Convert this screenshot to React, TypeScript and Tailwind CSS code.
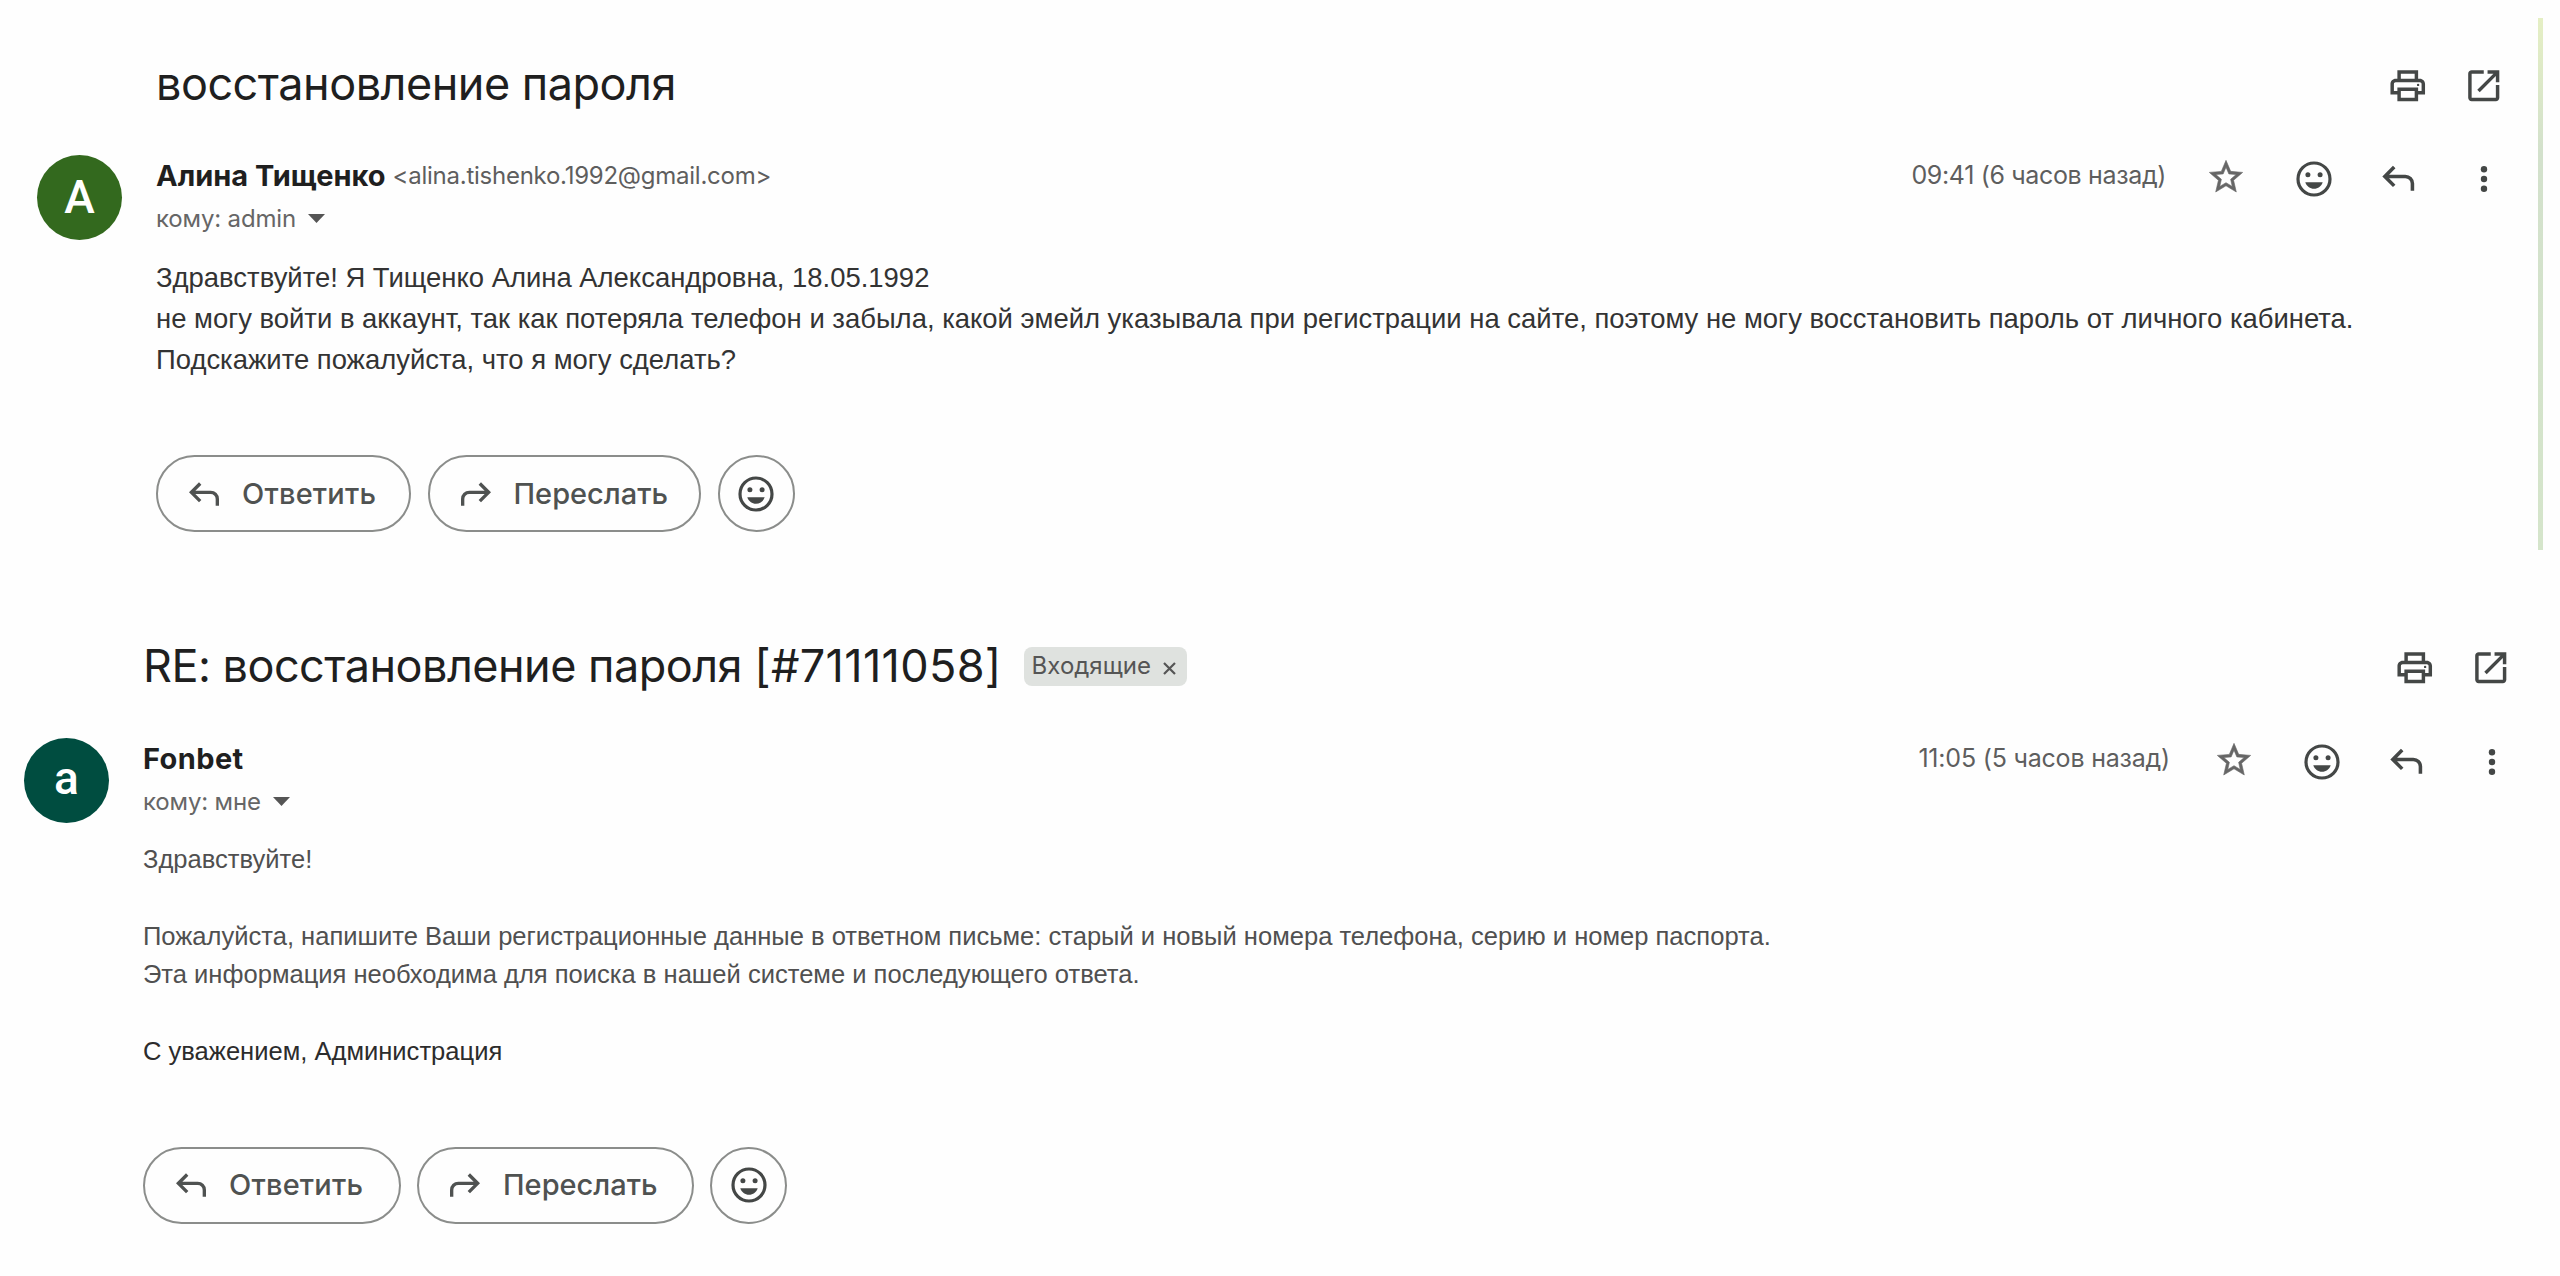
import type { ReactNode } from "react";
import clsx from "clsx";

function PrintIcon() {
  return (
    <svg className="size-[41.5px]" viewBox="0 0 24 24" fill="currentColor">
      <path d="M19 8h-1V3H6v5H5c-1.66 0-3 1.34-3 3v6h4v4h12v-4h4v-6c0-1.66-1.34-3-3-3zM8 5h8v3H8V5zm8 12v2H8v-4h8v2zm2-2v-2H6v2H4v-4c0-.55.45-1 1-1h14c.55 0 1 .45 1 1v4h-2z" />
      <circle cx="18" cy="11.5" r=".7" />
    </svg>
  );
}

function OpenIcon() {
  return (
    <svg className="size-[41.5px]" viewBox="0 0 24 24" fill="currentColor">
      <path d="M19 19H5V5h7V3H5c-1.11 0-2 .9-2 2v14c0 1.1.89 2 2 2h14c1.1 0 2-.9 2-2v-7.4h-2V19zM14.2 3v2h3.39l-9.33 9.33 1.41 1.41L19 6.41V10h2V3h-6.8z" />
    </svg>
  );
}

function StarIcon() {
  return (
    <svg className="size-[40px]" viewBox="0 0 24 24" fill="currentColor" stroke="currentColor" strokeWidth=".35">
      <path d="M22 9.24l-7.19-.62L12 2 9.19 8.63 2 9.24l5.46 4.73L5.82 21 12 17.27 18.18 21l-1.63-7.03L22 9.24zM12 15.4l-3.76 2.27 1-4.28-3.32-2.88 4.38-.38L12 6.1l1.71 4.04 4.38.38-3.32 2.88 1 4.28L12 15.4z" />
    </svg>
  );
}

function SmileIcon() {
  return (
    <svg className="size-9" viewBox="0 0 36 36" fill="currentColor">
      <circle cx="18" cy="18" r="16" fill="none" stroke="currentColor" strokeWidth="3.2" />
      <circle cx="11.9" cy="13.7" r="2.5" />
      <circle cx="24.1" cy="13.7" r="2.5" />
      <path d="M9.3 21.3h17.4c-1.3 4-4.7 6.5-8.7 6.5s-7.4-2.5-8.7-6.5z" />
    </svg>
  );
}

function ReplyIcon({ className }: { className: string }) {
  return (
    <svg className={className} viewBox="0 -960 960 960" fill="currentColor">
      <path d="M760-200v-160q0-50-35-85t-85-35H273l144 144-57 56-240-240 240-240 57 56-144 144h367q83 0 141.5 58.5T840-360v160h-80Z" />
    </svg>
  );
}

function DotsIcon() {
  return (
    <svg className="h-7 w-2" viewBox="0 0 8 28" fill="currentColor">
      <circle cx="4" cy="4.2" r="3.2" />
      <circle cx="4" cy="14" r="3.2" />
      <circle cx="4" cy="23.8" r="3.2" />
    </svg>
  );
}

function Toolbar({ time, timeClass }: { time: string; timeClass: string }) {
  return (
    <div className="flex items-center text-[#444746]">
      <span className={clsx("text-[25px] text-[#5e5e5e]", timeClass)}>{time}</span>
      <div className="flex items-center pt-1.5 *:flex *:w-[85px] *:justify-center">
        <span className="pr-[5px] pb-[3px] text-[#666]"><StarIcon /></span>
        <span><SmileIcon /></span>
        <span><ReplyIcon className="size-[42.5px]" /></span>
        <span><DotsIcon /></span>
      </div>
    </div>
  );
}

function Actions({ replyClass, forwardClass, className }: { replyClass: string; forwardClass: string; className: string }) {
  const button = "flex h-[77px] items-center gap-[18px] rounded-full border-2 border-[#8b8d8b] pl-[26px]";
  return (
    <div className={clsx("flex text-[29px] font-medium text-[#4f5251]", className)}>
      <button className={clsx(button, replyClass)}>
        <ReplyIcon className="size-10 shrink-0" />
        <span className="tracking-[0.2px]">Ответить</span>
      </button>
      <button className={clsx(button, forwardClass)}>
        <ReplyIcon className="size-10 shrink-0 -scale-x-100" />
        <span>Переслать</span>
      </button>
      <button className="flex size-[77px] items-center justify-center rounded-full border-2 border-[#8b8d8b] text-[#444746]">
        <SmileIcon />
      </button>
    </div>
  );
}

interface MessageProps {
  subject: ReactNode;
  subjectClass: string;
  avatar: ReactNode;
  sender: ReactNode;
  recipient: string;
  time: string;
  timeClass: string;
  className: string;
  children: ReactNode;
}

function Message({ subject, subjectClass, avatar, sender, recipient, time, timeClass, className, children }: MessageProps) {
  return (
    <article className={className}>
      <header className={clsx("flex h-[60px] items-center justify-between", subjectClass)}>
        {subject}
        <div className="flex pt-1 text-[#444746] *:flex *:w-[76px] *:justify-center">
          <span><PrintIcon /></span>
          <span><OpenIcon /></span>
        </div>
      </header>
      <div className="flex gap-[34px]">
        {avatar}
        <div className="min-w-0 flex-1">
          <div className="flex h-[41px] items-center justify-between">
            <div className="flex items-center gap-[7px]">{sender}</div>
            <Toolbar time={time} timeClass={timeClass} />
          </div>
          <div className="flex h-[45px] items-center gap-3 text-[24px] tracking-[-0.15px] text-[#666]">
            {recipient}
            <svg className="h-[9px] w-[17px]" viewBox="0 0 17 9" fill="#555">
              <path d="M0 0h17L8.5 9z" />
            </svg>
          </div>
          {children}
        </div>
      </div>
    </article>
  );
}

export default function App() {
  return (
    <main className="h-[1276px] w-[2560px] overflow-hidden bg-[#fefefe] pt-[18px] font-[Inter,sans-serif]">
      <div className="flex h-[532px] pr-[17px]">
        <Message
          className="flex-1 pt-9 pr-3 pl-[37px]"
          subjectClass="mb-[41px] pr-[4px] pl-[119px]"
          subject={<h2 className="text-[45px] tracking-[-0.5px] text-[#1f1f1f]">восстановление пароля</h2>}
          avatar={
            <div className="flex size-[85px] items-center justify-center rounded-full bg-[#33691e] font-[Roboto] text-[46px] font-medium text-white">
              A
            </div>
          }
          sender={
            <>
              <b className="text-[29px] text-[#1f1f1f]">Алина Тищенко</b>
              <span className="text-[24px] tracking-[-0.25px] text-[#5e5e5e]">&lt;alina.tishenko.1992@gmail.com&gt;</span>
            </>
          }
          recipient="кому: admin"
          time="09:41 (6 часов назад)"
          timeClass="mr-[20px] tracking-[-0.35px]"
        >
          <div className="mt-4 font-['Liberation_Sans',Arial,sans-serif] text-[27.45px] leading-[41px] whitespace-nowrap text-[#333]">
            <p>Здравствуйте! Я Тищенко Алина Александровна, 18.05.1992</p>
            <p>не могу войти в аккаунт, так как потеряла телефон и забыла, какой эмейл указывала при регистрации на сайте, поэтому не могу восстановить пароль от личного кабинета.</p>
            <p>Подскажите пожалуйста, что я могу сделать?</p>
          </div>
          <Actions className="mt-[75px] gap-[16.5px]" replyClass="w-[255px]" forwardClass="w-[273.5px]" />
        </Message>
        <div className="w-[5px] bg-linear-to-b from-[#e5efc4] via-[#d3e1cc] via-25% to-[#d5e5cb]" />
      </div>

      <Message
        className="pt-[86px] pr-[26px] pl-6"
        subjectClass="mb-[42px] pr-[5px] pl-[119px]"
        subject={
          <div className="flex flex-1 items-center gap-[22px]">
            <h2 className="text-[45px] tracking-[-0.52px] text-[#1f1f1f]">
              RE: восстановление пароля <span className="tracking-[0.35px]">[#71111058]</span>
            </h2>
            <span className="flex h-[39px] w-[163px] items-center gap-[12px] rounded-lg bg-[#dfe2df] pl-[8px] text-[24px] text-[#555]">
              Входящие
              <svg className="mt-1 size-[13px]" viewBox="0 0 13 13" stroke="currentColor" strokeWidth="2.2">
                <path d="M1 1l11 11M12 1L1 12" />
              </svg>
            </span>
          </div>
        }
        avatar={
          <div className="flex size-[85px] items-center justify-center rounded-full bg-[#004d40] pb-1 font-[Roboto] text-[46px] font-medium text-white">
            a
          </div>
        }
        sender={<b className="text-[29px] tracking-[0.4px] text-[#1f1f1f]">Fonbet</b>}
        recipient="кому: мне"
        time="11:05 (5 часов назад)"
        timeClass="mr-[24px] tracking-[-0.2px]"
      >
        <div className="mt-4 font-['Liberation_Sans',Arial,sans-serif] text-[25.56px] leading-[38.46px] text-[#505050]">
          <p className="mb-[38.46px]">Здравствуйте!</p>
          <p>Пожалуйста, напишите Ваши регистрационные данные в ответном письме: старый и новый номера телефона, серию и номер паспорта.</p>
          <p>Эта информация необходима для поиска в нашей системе и последующего ответа.</p>
          <p className="mt-[38.46px] text-[#2c2c2c]">С уважением, Администрация</p>
        </div>
        <Actions className="mt-[76px] gap-4" replyClass="w-[258px]" forwardClass="w-[277px]" />
      </Message>
    </main>
  );
}
